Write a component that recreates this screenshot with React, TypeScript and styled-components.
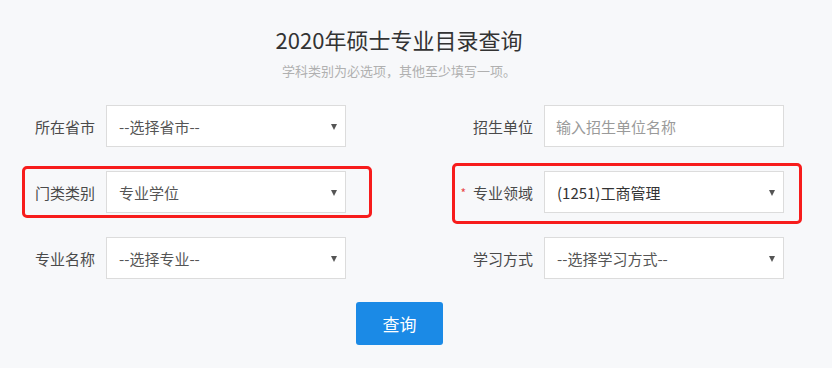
import React from "react";
import styled, {createGlobalStyle, css} from "styled-components";

const GlobalStyle = createGlobalStyle`
  body {
    margin: 0;
    background: #f7f8fa;
    font-family: "Noto Sans CJK SC", "Noto Sans", sans-serif;
  }
`;

const Page = styled.div`
  padding: 24px 0 0 22px;
`;

const Container = styled.div`
  width: 762px;
`;

const Title = styled.h1`
  margin: 0;
  padding-right: 8px;
  text-align: center;
  font-size: 22px;
  line-height: 31px;
  font-weight: normal;
  color: #333;
`;

const SubTitle = styled.p`
  margin: 6px 0 0;
  padding-right: 8px;
  text-align: center;
  font-size: 13px;
  line-height: 20px;
  color: #b0b0b0;
`;

const Form = styled.div`
  margin-top: 24px;
  display: grid;
  grid-template-columns: 324px 324px;
  column-gap: 114px;
  row-gap: 24px;
`;

type Mark = "left" | "right";

const Field = styled.div<{$mark?: Mark}>`
  position: relative;
  display: flex;
  align-items: center;
  height: 42px;
  ${p => p.$mark && css`
    &::before {
      content: "";
      position: absolute;
      border: 3px solid #f71c1c;
      border-radius: 5px;
      pointer-events: none;
      ${p.$mark === "left"
        ? css`top: -5px; bottom: -5px; left: 0; right: -26px;`
        : css`top: -8px; bottom: -11px; left: -8px; right: -18px;`}
    }
  `}
`;

const Label = styled.label`
  width: 84px;
  padding-right: 11px;
  box-sizing: border-box;
  text-align: right;
  font-size: 15px;
  color: #4a4a4a;
  white-space: nowrap;
`;

const Required = styled.span`
  color: #e9484b;
  font-size: 12px;
  margin-right: 7px;
  vertical-align: 1px;
`;

const SelectWrap = styled.div`
  position: relative;
  width: 240px;
  height: 42px;
  &::after {
    content: "";
    position: absolute;
    right: 9px;
    top: 19px;
    border-left: 3.5px solid transparent;
    border-right: 3.5px solid transparent;
    border-top: 6px solid #555;
    pointer-events: none;
  }
`;

const Select = styled.select<{$dark?: boolean}>`
  appearance: none;
  width: 100%;
  height: 100%;
  box-sizing: border-box;
  border: 1px solid #dcdcdc;
  border-radius: 0;
  background: #fff;
  padding: 0 24px 0 12px;
  font-family: inherit;
  font-size: 15px;
  color: ${p => (p.$dark ? "#333" : "#555")};
  outline: none;
`;

const Input = styled.input`
  width: 240px;
  height: 42px;
  box-sizing: border-box;
  border: 1px solid #dcdcdc;
  background: #fff;
  padding: 0 11px;
  font-family: inherit;
  font-size: 15px;
  color: #333;
  outline: none;
  &::placeholder {
    color: #9a9a9a;
  }
`;

const Actions = styled.div`
  display: flex;
  justify-content: center;
  padding-right: 7px;
  margin-top: 23px;
`;

const Button = styled.button`
  width: 87px;
  height: 43px;
  border: none;
  border-radius: 3px;
  background: #1b8ae6;
  color: #fff;
  font-family: inherit;
  font-size: 17px;
  cursor: pointer;
`;

const DropDown = ({value, dark}: {value: string; dark?: boolean}) => (
  <SelectWrap>
    <Select $dark={dark} defaultValue={value}>
      <option>{value}</option>
    </Select>
  </SelectWrap>
);

export default function App() {
  return (
    <Page>
      <GlobalStyle/>
      <Container>
        <Title>2020年硕士专业目录查询</Title>
        <SubTitle>学科类别为必选项，其他至少填写一项。</SubTitle>
        <Form>
          <Field>
            <Label>所在省市</Label>
            <DropDown value="--选择省市--"/>
          </Field>
          <Field>
            <Label>招生单位</Label>
            <Input placeholder="输入招生单位名称"/>
          </Field>
          <Field $mark="left">
            <Label>门类类别</Label>
            <DropDown value="专业学位"/>
          </Field>
          <Field $mark="right">
            <Label><Required>*</Required>专业领域</Label>
            <DropDown value="(1251)工商管理" dark/>
          </Field>
          <Field>
            <Label>专业名称</Label>
            <DropDown value="--选择专业--"/>
          </Field>
          <Field>
            <Label>学习方式</Label>
            <DropDown value="--选择学习方式--"/>
          </Field>
        </Form>
        <Actions>
          <Button>查询</Button>
        </Actions>
      </Container>
    </Page>
  );
}
